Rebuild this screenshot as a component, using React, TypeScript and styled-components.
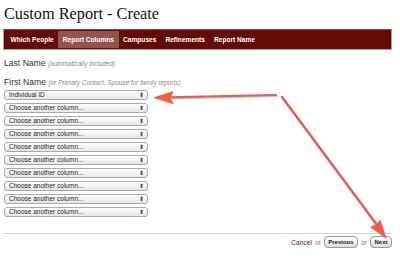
import React from "react";
import styled, { createGlobalStyle } from "styled-components";

const GlobalStyle = createGlobalStyle`
	html, body {
		margin: 0;
		padding: 0;
		background: #ffffff;
	}
	body {
		font-family: "Liberation Sans", Arial, sans-serif;
		color: #222;
	}
`;

const tabs = ["Which People", "Report Columns", "Campuses", "Refinements", "Report Name"];
const activeTab = "Report Columns";
const extraColumns = 9;

const App: React.FC = () => {
	return (
		<Page>
			<GlobalStyle />
			<Title>Custom Report - Create</Title>
			<NavBar>
				{tabs.map((tab) => (
					<Tab key={tab} $active={tab === activeTab}>
						{tab}
					</Tab>
				))}
			</NavBar>
			<Field>
				Last Name <Hint>(automatically included)</Hint>
			</Field>
			<Field>
				First Name <Hint>(or Primary Contact, Spouse for family reports)</Hint>
			</Field>
			<SelectList>
				<SelectBox>
					<SelectText>Individual ID</SelectText>
					<SelectArrows>⬍</SelectArrows>
				</SelectBox>
				{Array.from({ length: extraColumns }).map((_, i) => (
					<SelectBox key={i}>
						<SelectText>Choose another column...</SelectText>
						<SelectArrows>⬍</SelectArrows>
					</SelectBox>
				))}
			</SelectList>
			<Footer>
				<CancelLink href="#">Cancel</CancelLink>
				<Or>or</Or>
				<Button>Previous</Button>
				<Or>or</Or>
				<Button>Next</Button>
			</Footer>
			<Annotations viewBox="0 0 400 260" width="400" height="260">
				<defs>
					<filter id="shadow" x="-10%" y="-10%" width="120%" height="120%">
						<feDropShadow dx="0.6" dy="0.8" stdDeviation="0.4" floodColor="#6a8a8a" floodOpacity="0.55" />
					</filter>
				</defs>
				<g filter="url(#shadow)" fill="#f25a4c" stroke="#f25a4c">
					<line x1="276" y1="95" x2="168" y2="97.3" strokeWidth="2.2" strokeLinecap="round" />
					<polygon points="154,97.6 173,91.6 170,97.4 173,103.6" strokeWidth="0.5" strokeLinejoin="round" />
					<line x1="282" y1="97" x2="377" y2="225" strokeWidth="2.2" strokeLinecap="round" />
					<polygon points="386,238 370.5,227.1 376.6,224.4 380.1,219.9" strokeWidth="0.5" strokeLinejoin="round" />
				</g>
			</Annotations>
		</Page>
	);
};

export default App;

const Page = styled.div`
	position: relative;
	width: 400px;
	height: 260px;
	padding: 0 8px 0 3px;
	box-sizing: border-box;
	overflow: hidden;
`;

const Title = styled.h1`
	margin: 0;
	padding: 3px 0 0 1px;
	font-family: "Liberation Serif", "Times New Roman", serif;
	font-weight: normal;
	font-size: 16.3px;
	line-height: 21px;
	color: #111;
`;

const NavBar = styled.div`
	display: flex;
	align-items: stretch;
	margin-top: 5px;
	height: 17px;
	padding: 1px 3px 1px 2px;
	background-color: #660a04;
	border: 1px solid #b89a98;
	border-top-color: #8a4a46;
`;

const Tab = styled.div<{ $active?: boolean }>`
	display: flex;
	align-items: center;
	padding: 0 4.5px;
	font-size: 6.6px;
	font-weight: bold;
	color: #ffffff;
	background-color: ${(p) => (p.$active ? "#975250" : "transparent")};
	white-space: nowrap;
`;

const Field = styled.div`
	margin: 8px 0 0 1px;
	font-size: 8.6px;
	line-height: 11px;
	color: #333;
	white-space: nowrap;

	& + & {
		margin-top: 8px;
	}
`;

const Hint = styled.span`
	font-size: 6.4px;
	font-style: italic;
	color: #888;
`;

const SelectList = styled.div`
	display: flex;
	flex-direction: column;
	gap: 3px;
	margin-top: 2px;
	margin-left: 1px;
`;

const SelectBox = styled.div`
	display: flex;
	align-items: center;
	justify-content: space-between;
	width: 144px;
	height: 10px;
	box-sizing: border-box;
	padding: 0 3px 0 4px;
	border: 1px solid #a9a9a9;
	border-radius: 3px;
	background: linear-gradient(#ffffff, #e6e6e6);
`;

const SelectText = styled.span`
	font-size: 6.5px;
	line-height: 8px;
	color: #1c1c1c;
`;

const SelectArrows = styled.span`
	font-family: "DejaVu Sans", sans-serif;
	font-size: 6px;
	line-height: 8px;
	color: #444;
`;

const Footer = styled.div`
	display: flex;
	align-items: center;
	justify-content: flex-end;
	margin-top: 16px;
	padding-top: 2px;
	border-top: 1px solid #d2d2d2;
	font-size: 6.6px;
`;

const CancelLink = styled.a`
	color: #6a1010;
	text-decoration: none;
`;

const Or = styled.span`
	margin: 0 3px;
	color: #777;
`;

const Button = styled.button`
	height: 12px;
	padding: 0 3.5px;
	font-family: "Liberation Sans", Arial, sans-serif;
	font-size: 6px;
	font-weight: bold;
	color: #222;
	border: 1px solid #9a9a9a;
	border-radius: 4px;
	background: linear-gradient(#ffffff, #dcdcdc);
	line-height: 10px;
`;

const Annotations = styled.svg`
	position: absolute;
	left: 0;
	top: 0;
	pointer-events: none;
`;
